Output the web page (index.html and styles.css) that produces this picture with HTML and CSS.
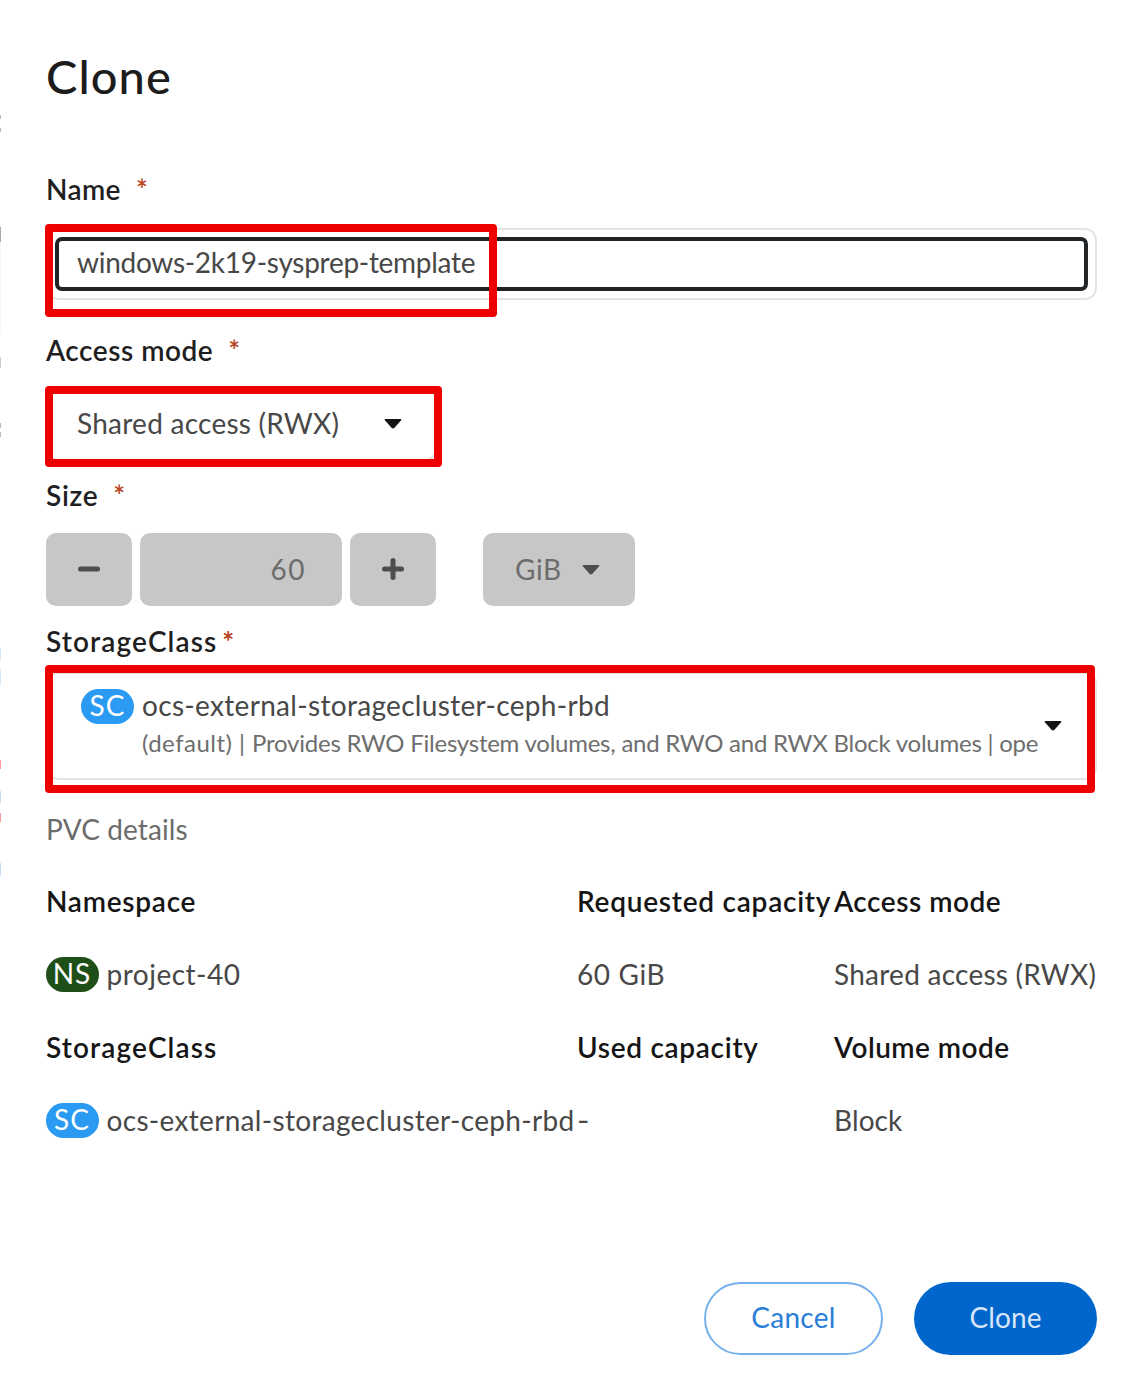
FILE: index.html
```html
<!DOCTYPE html>
<html lang="en">
<head>
<meta charset="utf-8">
<title>Clone</title>
<link rel="stylesheet" href="styles.css">
</head>
<body>
<div class="backdrop-edge"></div>
<main class="modal">
  <h1 class="title">Clone</h1>

  <label class="label name-label"><span class="t-name">Name</span><span class="req">*</span></label>
  <div class="field name-field">
    <div class="focus-ring"><span class="t-value">windows-2k19-sysprep-template</span></div>
    <div class="mark mark-name"></div>
  </div>

  <label class="label access-label"><span class="t-access">Access mode</span><span class="req">*</span></label>
  <div class="field access-select">
    <span class="t-shared">Shared access (RWX)</span>
    <svg class="caret" viewBox="0 0 18 10"><path d="M1.500 0h15q1.500 0 .6 1.200L10.500 8.800q-1.500 1.400-3 0L.9 1.200Q0 0 1.500 0z"/></svg>
    <div class="mark mark-access"></div>
  </div>

  <label class="label size-label"><span class="t-size">Size</span><span class="req">*</span></label>
  <div class="size-row">
    <div class="disabled step"><svg width="22" height="22" viewBox="0 0 22 22"><path d="M2.500 11h17"/></svg></div>
    <div class="disabled amount">60</div>
    <div class="disabled step"><svg width="22" height="22" viewBox="0 0 22 22"><path d="M2.500 11h17M11 2.500v17"/></svg></div>
    <div class="disabled unit"><span>GiB</span><svg class="caret" viewBox="0 0 18 10"><path d="M1.500 0h15q1.500 0 .6 1.200L10.500 8.800q-1.500 1.400-3 0L.9 1.200Q0 0 1.500 0z"/></svg></div>
  </div>

  <label class="label class-label"><span class="t-class">StorageClass</span><span class="req">*</span></label>
  <div class="field class-select">
    <span class="pill sc">SC</span>
    <div class="class-text">
      <div class="t-ocs">ocs-external-storagecluster-ceph-rbd</div>
      <div class="class-desc"><span class="t-default">(default) | </span>Provides RWO Filesystem volumes, and RWO and RWX Block volumes | ope</div>
    </div>
    <svg class="caret" viewBox="0 0 18 10"><path d="M1.500 0h15q1.500 0 .6 1.200L10.500 8.800q-1.500 1.400-3 0L.9 1.200Q0 0 1.500 0z"/></svg>
    <div class="mark mark-class"></div>
  </div>

  <div class="pvc">PVC details</div>
  <div class="details">
    <div class="head t-namespace">Namespace</div>
    <div class="head t-requested">Requested capacity</div>
    <div class="head t-access">Access mode</div>
    <div class="res"><span class="pill ns">NS</span><span class="t-project">project-40</span></div>
    <div class="t-gib">60 GiB</div>
    <div class="t-shared">Shared access (RWX)</div>
    <div class="head t-class">StorageClass</div>
    <div class="head t-used">Used capacity</div>
    <div class="head t-volume">Volume mode</div>
    <div class="res"><span class="pill sc">SC</span><span class="t-ocs">ocs-external-storagecluster-ceph-rbd</span></div>
    <div class="dash">-</div>
    <div class="t-block">Block</div>
  </div>

  <div class="actions">
    <button class="btn cancel">Cancel</button>
    <button class="btn clone">Clone</button>
  </div>
</main>
</body>
</html>
```
FILE: styles.css
```css
* { box-sizing: border-box; }
body {
  margin: 0;
  background: #fff;
  color: #484848;
  font: 400 28px/36px Lato, "Liberation Sans", sans-serif;
  font-kerning: normal;
  white-space: nowrap;
}
.modal {
  width: 1121px;
  height: 1375px;
  padding: 48px 24px 20px 46px;
  overflow: hidden;
  display: flex;
  flex-direction: column;
}
/* sliver of the page behind the dialog */
.backdrop-edge {
  position: absolute;
  left: 0;
  top: 0;
  width: 1px;
  height: 960px;
  background: linear-gradient(#fff 115px, #bbb 115px, #bbb 119px, #fff 119px, #fff 128px, #bbb 128px, #bbb 132px, #fff 132px, #fff 227px, #aaa 227px, #aaa 242px, #f7f7f7 242px, #f7f7f7 332px, #fff 332px, #fff 357px, #ccc 357px, #ccc 368px, #fff 368px, #fff 423px, #bbb 423px, #bbb 428px, #fff 428px, #fff 432px, #bbb 432px, #bbb 437px, #fff 437px, #fff 648px, #d5e8fa 648px, #d5e8fa 660px, #fff 660px, #fff 669px, #d5e8fa 669px, #d5e8fa 685px, #fff 685px, #fff 760px, #f99 760px, #f99 769px, #fff 769px, #fff 791px, #c5dff8 791px, #c5dff8 803px, #fff 803px, #fff 813px, #f99 813px, #f99 822px, #fff 822px, #fff 863px, #c5dff8 863px, #c5dff8 876px, #fff 876px);
}
.title {
  margin: 0;
  font-size: 47px;
  line-height: 56px;
  font-weight: 500;
  letter-spacing: 1.100px;
  color: #1c1c1c;
}
.label, .head { font-weight: 600; color: #1f1f1f; }
.label { display: flex; height: 36px; }
.req { color: #b8431c; font-size: 28px; font-weight: 600; line-height: 36px; margin-left: 15px; }
.name-label { margin-top: 67px; }
.access-label { margin-top: 32px; }
.size-label { margin-top: 16px; }
.class-label { margin-top: 16px; }
.class-label .req { margin-left: 5px; font-weight: 700; }

.field { position: relative; border: 2px solid #e4e4e4; border-radius: 12px; display: flex; }
.name-field { margin-top: 21px; height: 72px; padding: 7px 7px 7px; }
.focus-ring {
  flex: 1;
  border: 4px solid #212427;
  border-radius: 7px;
  padding: 4px 0 0 18px;
  line-height: 34px;
}
.access-select { margin-top: 20px; width: 391px; height: 73px; padding: 15px 33px 0 29px; justify-content: space-between; }
.caret { width: 18px; height: 10px; fill: #151515; flex: none; }
.access-select .caret { margin-top: 14px; }

.size-row { display: flex; margin-top: 20px; height: 73px; margin-bottom: 1px; }
.disabled {
  display: flex;
  align-items: center;
  border-radius: 10px;
  background: #c7c7c7;
  color: #6c6c6c;
}
.step { width: 86px; justify-content: center; padding-bottom: 2px; }
.step svg { stroke: #4d4d4d; stroke-width: 5; stroke-linecap: round; }
.amount { width: 202px; margin: 0 8px; padding: 0 36px 2px 0; justify-content: flex-end; letter-spacing: 1.500px; }
.unit { width: 152px; margin-left: 47px; padding: 0 35px 2px 32px; justify-content: space-between; letter-spacing: .6px; }
.unit .caret { fill: #4d4d4d; margin-top: 3px; }

.class-select { margin-top: 13px; height: 108px; padding: 13px 33px 0 33px; }
.pill {
  flex: none;
  width: 53px;
  height: 35px;
  border-radius: 18px;
  color: #fff;
  text-align: center;
  line-height: 33px;
  letter-spacing: 1px;
}
.sc { background: #2b9af3; }
.ns { background: #1e4f18; }
.class-select .pill { margin-top: 2px; }
.class-text { width: 902px; margin-left: 8px; }
.class-desc { font-size: 24px; line-height: 36px; margin-top: 2px; color: #6e6e6e; letter-spacing: -.24px; }
.t-default { letter-spacing: .48px; }
.class-select .caret { margin-top: 34px; }

/* red call-out frames drawn over the form controls */
.mark { position: absolute; border: 8px solid #e00; border-radius: 4px; }
.mark-name { left: -3px; top: -6px; width: 452px; height: 93px; }
.mark-access { left: -3px; top: -4px; width: 397px; height: 81px; }
.mark-class { left: -3px; top: -9px; width: 1050px; height: 128px; }

.pvc { margin-top: 31px; color: #6c6c6c; letter-spacing: .1px; }
.details {
  display: grid;
  grid-template-columns: 531px 257px 263px;
  grid-auto-rows: 36px;
  row-gap: 37px;
  margin-top: 36px;
}
.head { color: #151515; }
.res { display: flex; }
.res .pill { margin: 1px 8px 0 -.5px; }
.dash { transform: scaleX(1.200); transform-origin: left; }

.t-name { letter-spacing: .4px; }
.t-value { letter-spacing: -.28px; }
.t-access { letter-spacing: .52px; }
.t-shared { letter-spacing: .25px; }
.t-size { letter-spacing: .7px; }
.t-class { letter-spacing: 1.100px; }
.t-ocs { letter-spacing: .32px; }
.t-namespace { letter-spacing: .75px; }
.t-requested { letter-spacing: .75px; }
.t-project { letter-spacing: .5px; }
.t-gib { letter-spacing: .6px; }
.t-used { letter-spacing: .7px; }
.t-volume { letter-spacing: .45px; }
.t-block { letter-spacing: .1px; }

.actions { display: flex; justify-content: flex-end; gap: 31px; margin-top: auto; }
.btn {
  height: 73px;
  padding: 0 0 4px;
  border: 0;
  border-radius: 37px;
  font: inherit;
}
.cancel { width: 179px; background: #fff; border: 2px solid #75b1ec; color: #2b7ed6; letter-spacing: .3px; }
.clone { width: 183px; background: #06c; color: #d6e6f7; letter-spacing: .1px; }
```
